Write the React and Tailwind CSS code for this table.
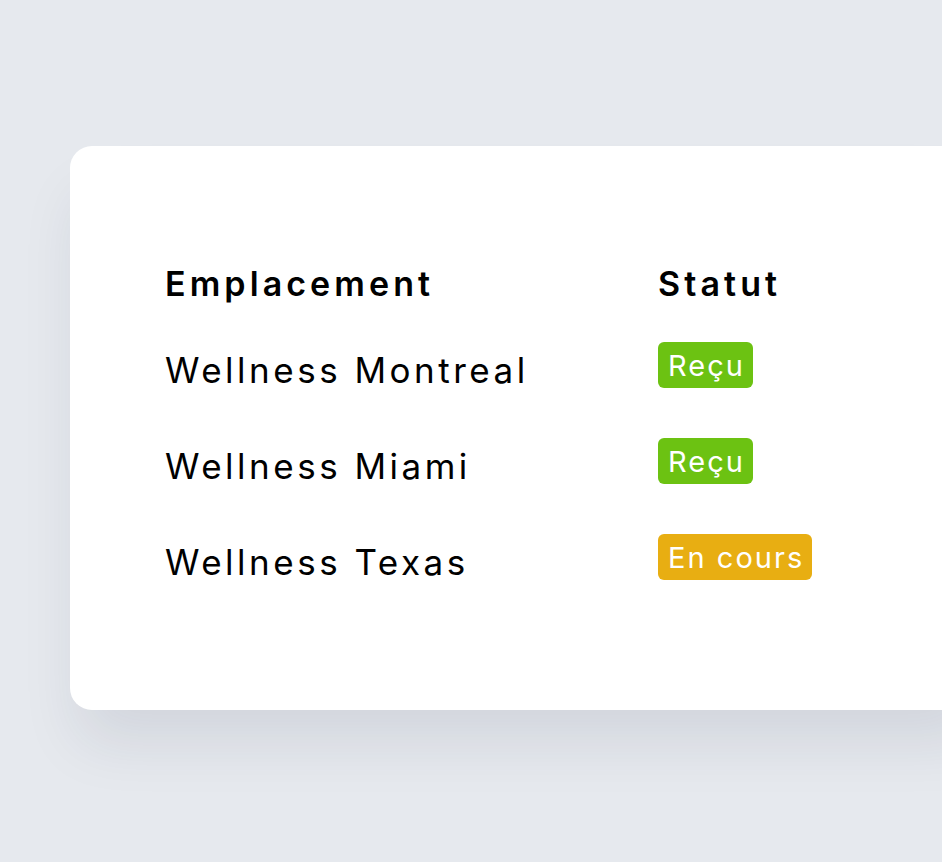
import React from "react";

const rows = [
  { place: "Wellness Montreal", status: "Reçu", tone: "green" },
  { place: "Wellness Miami", status: "Reçu", tone: "green" },
  { place: "Wellness Texas", status: "En cours", tone: "amber" },
];

function Badge({ label, tone }) {
  const color = tone === "green" ? "bg-[#6cc212]" : "bg-[#e8ae12]";
  return (
    <span
      className={`${color} -mt-[10px] inline-flex h-[46px] items-center rounded-[6px] pl-[10px] pr-[8px] text-[29px] leading-none tracking-[0.07em] text-white`}
    >
      {label}
    </span>
  );
}

export default function App() {
  return (
    <div
      className="h-[862px] w-full overflow-hidden bg-[#e6e9ee] pt-[146px] pl-[70px]"
      style={{ fontFamily: "Inter, 'Noto Sans', sans-serif" }}
    >
      <div className="w-[920px] rounded-l-[22px] bg-white pt-[100px] pb-[100px] pl-[95px] shadow-[0_40px_60px_-10px_rgba(30,40,70,0.10)]">
        <div className="flex h-[76px] items-center text-[34px] font-semibold leading-none tracking-[0.12em] text-black">
          <div className="w-[493px]">Emplacement</div>
          <div>Statut</div>
        </div>
        {rows.map((row) => (
          <div
            key={row.place}
            className="flex h-[96px] items-center text-[35px] leading-none tracking-[0.1em] text-black"
          >
            <div className="w-[493px]">{row.place}</div>
            <Badge label={row.status} tone={row.tone} />
          </div>
        ))}
      </div>
    </div>
  );
}
